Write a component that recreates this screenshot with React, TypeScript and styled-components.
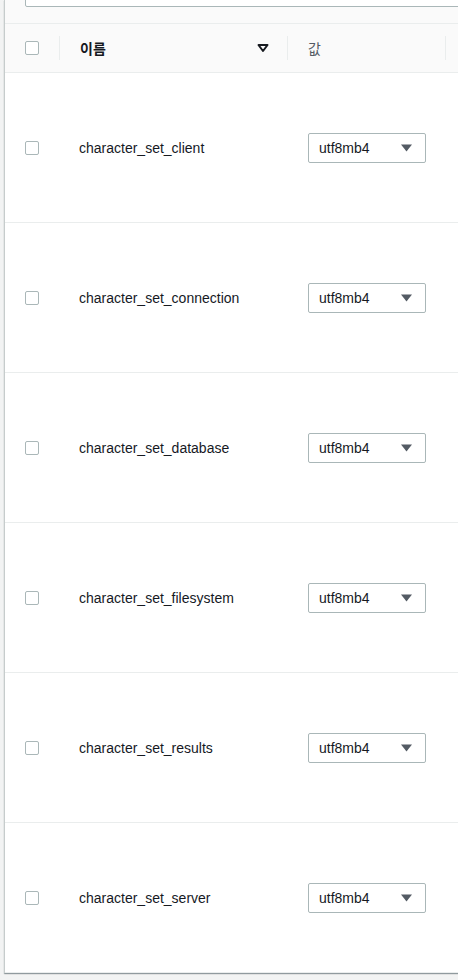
import React from "react";
import styled, { createGlobalStyle } from "styled-components";

const Global = createGlobalStyle`
  html, body { margin: 0; padding: 0; background: #f2f3f3; overflow: hidden; }
  body { font-family: "Liberation Sans", "Noto Sans CJK KR", Arial, sans-serif; color: #16191f; }
`;

const Page = styled.div`
  width: 520px;
  padding-left: 4px;
  height: 980px;
  box-sizing: border-box;
`;

const Panel = styled.div`
  background: #ffffff;
  border-left: 1px solid #c6cccc;
  box-shadow: 0 1px 1px 0 rgba(0, 28, 36, 0.3), 1px 1px 1px 0 rgba(0, 28, 36, 0.15);
  overflow: hidden;
`;

const FilterBar = styled.div`
  height: 23px;
  background: #fafafa;
  border-bottom: 1px solid #eaeded;
  padding-left: 20px;
  overflow: hidden;
`;

const SearchBox = styled.div`
  margin-top: -25px;
  height: 32px;
  box-sizing: border-box;
  border: 1px solid #aab7b8;
  border-radius: 2px;
  background: #fff;
  display: flex;
  align-items: center;
  gap: 10px;
  padding-left: 10px;
`;

const SearchText = styled.span`
  font-size: 14px;
  line-height: 20px;
  margin-top: -2px;
  color: #16191f;
`;

const Grid = styled.div`
  display: grid;
  grid-template-columns: 55px 228px 158px 1fr;
`;

const HeaderRow = styled.div`
  display: contents;
`;

const HeadCell = styled.div<{ $divider?: boolean }>`
  height: 49px;
  box-sizing: border-box;
  background: #fafafa;
  border-bottom: 1px solid #eaeded;
  display: flex;
  align-items: center;
  padding-left: 20px;
  padding-right: 19px;
  position: relative;
  &::before {
    content: "";
    display: ${(p) => (p.$divider ? "block" : "none")};
    position: absolute;
    left: -1px;
    top: 12px;
    height: 24px;
    width: 1px;
    background: #eaeded;
  }
`;

const HeadLabel = styled.span<{ $bold?: boolean }>`
  font-size: 14px;
  font-weight: ${(p) => (p.$bold ? 700 : 400)};
  color: ${(p) => (p.$bold ? "#16191f" : "#545b64")};
  flex: 1;
`;

const Cell = styled.div<{ $pad?: number }>`
  height: 150px;
  box-sizing: border-box;
  border-bottom: 1px solid #eaeded;
  display: flex;
  align-items: center;
  padding-left: ${(p) => p.$pad ?? 20}px;
  font-size: 14px;
  color: #16191f;
`;

const Checkbox = styled.span`
  display: block;
  width: 14px;
  height: 14px;
  box-sizing: border-box;
  border: 1px solid #aab7b8;
  border-radius: 2px;
  background: #fff;
`;

const Select = styled.div`
  width: 118px;
  height: 30px;
  box-sizing: border-box;
  border: 1px solid #aab7b8;
  border-radius: 2px;
  background: #fff;
  display: flex;
  align-items: center;
  justify-content: space-between;
  padding: 0 13px 0 10px;
  font-size: 14px;
  color: #16191f;
`;

const SortIcon = () => (
  <svg width="12" height="10" viewBox="0 0 12 10">
    <polygon points="1.5,2 10.5,2 6,8" fill="none" stroke="#16191f" strokeWidth="2" strokeLinejoin="round" />
  </svg>
);

const Caret = () => (
  <svg width="11" height="8" viewBox="0 0 11 8">
    <polygon points="0,0.5 11,0.5 5.5,7.5" fill="#545b64" />
  </svg>
);

const SearchIcon = () => (
  <svg width="16" height="16" viewBox="0 0 16 16">
    <circle cx="7" cy="7" r="5" fill="none" stroke="#aab7b8" strokeWidth="2" />
    <line x1="10.5" y1="10.5" x2="15" y2="15" stroke="#aab7b8" strokeWidth="2" />
  </svg>
);

const names = [
  "character_set_client",
  "character_set_connection",
  "character_set_database",
  "character_set_filesystem",
  "character_set_results",
  "character_set_server",
];

export default function App() {
  return (
    <>
      <Global />
      <Page>
        <Panel>
          <FilterBar>
            <SearchBox>
              <SearchIcon />
              <SearchText>character_set</SearchText>
            </SearchBox>
          </FilterBar>
          <Grid>
            <HeaderRow>
              <HeadCell>
                <Checkbox />
              </HeadCell>
              <HeadCell $divider>
                <HeadLabel $bold>이름</HeadLabel>
                <SortIcon />
              </HeadCell>
              <HeadCell $divider>
                <HeadLabel>값</HeadLabel>
              </HeadCell>
              <HeadCell $divider />
            </HeaderRow>
            {names.map((n) => (
              <React.Fragment key={n}>
                <Cell>
                  <Checkbox />
                </Cell>
                <Cell $pad={19}>{n}</Cell>
                <Cell>
                  <Select>
                    <span>utf8mb4</span>
                    <Caret />
                  </Select>
                </Cell>
                <Cell />
              </React.Fragment>
            ))}
          </Grid>
        </Panel>
      </Page>
    </>
  );
}
